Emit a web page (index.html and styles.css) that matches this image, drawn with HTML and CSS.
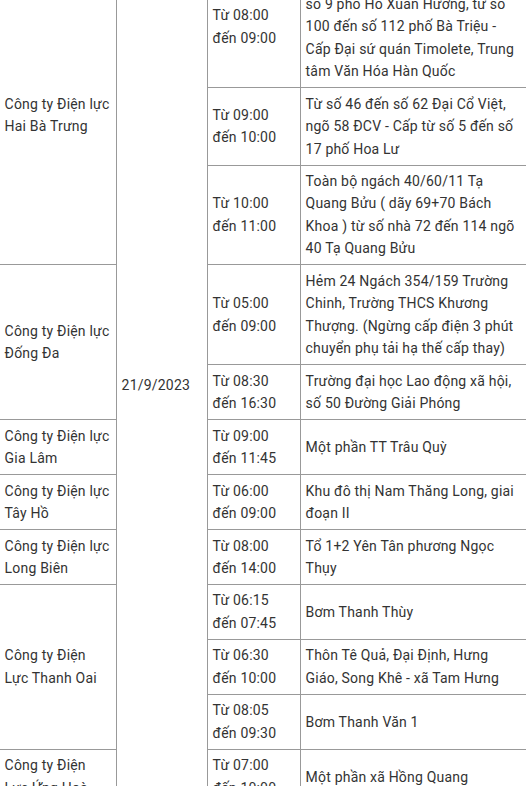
FILE: index.html
```html
<!DOCTYPE html>
<html lang="vi">
<head>
<meta charset="utf-8">
<title>Lịch cắt điện</title>
<link rel="stylesheet" href="styles.css">
</head>
<body>
<div class="wrap">
<table class="sched">
  <colgroup>
    <col class="c-co">
    <col class="c-date">
    <col class="c-time">
    <col class="c-area">
  </colgroup>
  <tbody>
    <tr>
      <td rowspan="3">Công ty Điện lực Hai Bà Trưng</td>
      <td rowspan="12">21/9/2023</td>
      <td>Từ 08:00 đến 09:00</td>
      <td>Từ số 1 đến số 7 phố Nguyễn Du, số 9 phố Hồ Xuân Hương, từ số 100 đến số 112 phố Bà Triệu - Cấp Đại sứ quán Timolete, Trung tâm Văn Hóa Hàn Quốc</td>
    </tr>
    <tr>
      <td>Từ 09:00 đến 10:00</td>
      <td>Từ số 46 đến số 62 Đại Cổ Việt, ngõ 58 ĐCV - Cấp từ số 5 đến số 17 phố Hoa Lư</td>
    </tr>
    <tr>
      <td>Từ 10:00 đến 11:00</td>
      <td>Toàn bộ ngách 40/60/11 Tạ Quang Bửu ( dãy 69+70 Bách Khoa ) từ số nhà 72 đến 114 ngõ 40 Tạ Quang Bửu</td>
    </tr>
    <tr>
      <td rowspan="2">Công ty Điện lực Đống Đa</td>
      <td>Từ 05:00 đến 09:00</td>
      <td>Hẻm 24 Ngách 354/159 Trường Chinh, Trường THCS Khương Thượng. (Ngừng cấp điện 3 phút chuyển phụ tải hạ thế cấp thay)</td>
    </tr>
    <tr>
      <td>Từ 08:30 đến 16:30</td>
      <td>Trường đại học Lao động xã hội, số 50 Đường Giải Phóng</td>
    </tr>
    <tr>
      <td>Công ty Điện lực Gia Lâm</td>
      <td>Từ 09:00 đến 11:45</td>
      <td>Một phần TT Trâu Quỳ</td>
    </tr>
    <tr>
      <td>Công ty Điện lực Tây Hồ</td>
      <td>Từ 06:00 đến 09:00</td>
      <td>Khu đô thị Nam Thăng Long, giai đoạn II</td>
    </tr>
    <tr>
      <td>Công ty Điện lực Long Biên</td>
      <td>Từ 08:00 đến 14:00</td>
      <td>Tổ 1+2 Yên Tân phương Ngọc Thụy</td>
    </tr>
    <tr>
      <td rowspan="3">Công ty Điện Lực Thanh Oai</td>
      <td>Từ 06:15 đến 07:45</td>
      <td>Bơm Thanh Thùy</td>
    </tr>
    <tr>
      <td>Từ 06:30 đến 10:00</td>
      <td>Thôn Tê Quả, Đại Định, Hưng Giáo, Song Khê - xã Tam Hưng</td>
    </tr>
    <tr>
      <td>Từ 08:05 đến 09:30</td>
      <td>Bơm Thanh Văn 1</td>
    </tr>
    <tr>
      <td>Công ty Điện Lực Ứng Hoà</td>
      <td>Từ 07:00 đến 10:00</td>
      <td>Một phần xã Hồng Quang</td>
    </tr>
  </tbody>
</table>
</div>
</body>
</html>
```

FILE: styles.css
```css
html, body {
  margin: 0;
  padding: 0;
  background: #fff;
}

.wrap {
  overflow: hidden;
  width: 526px;
}

.sched {
  border-collapse: collapse;
  table-layout: fixed;
  width: 527px;
  margin: -35px 0 0 -1px;
  font-family: Roboto, "Noto Sans", Arial, sans-serif;
  font-size: 14px;
  line-height: 1.6;
  letter-spacing: 0.2px;
  color: #333;
}

.c-co { width: 117px; }
.c-date { width: 91px; }
.c-time { width: 93px; }
.c-area { width: 226px; }

.sched td {
  border: 1px solid #999;
  padding: 4.6px;
  vertical-align: middle;
  text-align: left;
}
```
